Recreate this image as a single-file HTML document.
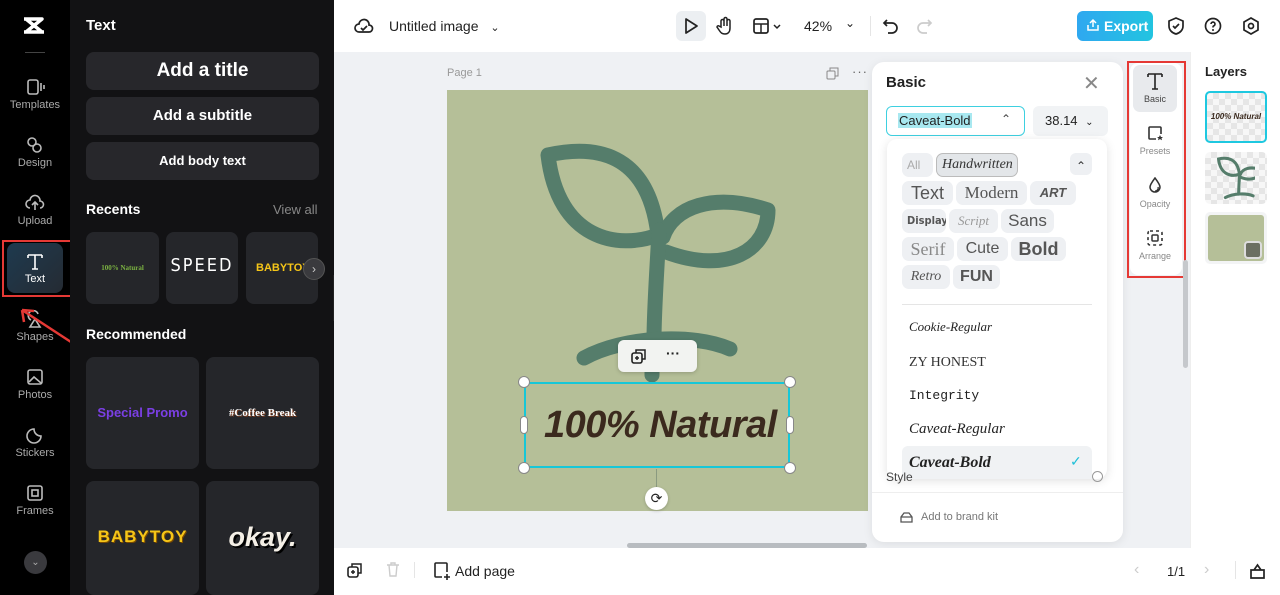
<!DOCTYPE html>
<html><head><meta charset="utf-8"><style>
*{box-sizing:border-box;margin:0;padding:0}
body{width:1280px;height:595px;overflow:hidden;font-family:"Liberation Sans",sans-serif;background:#fff;position:relative}
.a{position:absolute}
.nav{left:0;top:0;width:70px;height:595px;background:#000}
.ni{position:absolute;left:0;width:70px;text-align:center;color:#aaa;font-size:11px}
.ni svg{display:block;margin:0 auto 3px}
.pan{left:70px;top:0;width:264px;height:595px;background:#121214}
.btn{position:absolute;left:16px;width:233px;background:#27272b;border-radius:8px;color:#fff;font-weight:bold;text-align:center}
.card{position:absolute;background:#25262a;border-radius:8px}
.row{position:absolute;left:15px;height:24px;white-space:nowrap}
.pill{display:inline-block;background:#eef0f3;border-radius:7px;color:#555;padding:0 5px;margin-right:3px;height:24px;line-height:24px;vertical-align:top;overflow:hidden}
</style></head><body>
<div class="a nav">
 <svg class="a" style="left:22px;top:16px" width="26" height="20" viewBox="0 0 26 20"><path d="M2 3h18l-16 13h18M2 16h18L4 3" stroke="#fff" stroke-width="3.5" fill="none" stroke-linejoin="round"/></svg>
 <div class="a" style="left:25px;top:52px;width:20px;height:1px;background:#444"></div>
 <div class="ni" style="top:78px"><svg width="20" height="18"><rect x="3" y="2" width="10" height="14" rx="2" stroke="#bbb" stroke-width="1.6" fill="none"/><path d="M16 5v8M19 7v4" stroke="#bbb" stroke-width="1.6"/></svg>Templates</div>
 <div class="ni" style="top:136px"><svg width="20" height="18"><circle cx="7" cy="6" r="4" stroke="#bbb" stroke-width="1.6" fill="none"/><circle cx="12" cy="12" r="4" stroke="#bbb" stroke-width="1.6" fill="none"/></svg>Design</div>
 <div class="ni" style="top:194px"><svg width="20" height="18"><path d="M5 14a4 4 0 0 1 0-8 5 5 0 0 1 10 1 3.5 3.5 0 0 1 0 7M10 16V9M7 11l3-3 3 3" stroke="#bbb" stroke-width="1.6" fill="none"/></svg>Upload</div>
 <div class="a" style="left:7px;top:243px;width:56px;height:50px;border-radius:8px;background:linear-gradient(135deg,#1e3a4f,#252b33)"></div>
 <div class="a" style="left:2px;top:240px;width:70px;height:57px;border:2px solid #e53935"></div>
 <div class="ni" style="top:252px;color:#fff"><svg width="20" height="18"><path d="M3 3h14M10 3v14M3 3v3M17 3v3M7 17h6" stroke="#fff" stroke-width="1.6" fill="none"/></svg>Text</div>
 <div class="ni" style="top:310px"><svg width="20" height="18"><path d="M6 10a5 5 0 1 1 7-6M10 9l5 8H5z" stroke="#bbb" stroke-width="1.6" fill="none"/></svg>Shapes</div>
 <div class="ni" style="top:368px"><svg width="20" height="18"><rect x="3" y="2" width="14" height="14" rx="2" stroke="#bbb" stroke-width="1.6" fill="none"/><path d="M4 14l5-5 7 6" stroke="#bbb" stroke-width="1.6" fill="none"/></svg>Photos</div>
 <div class="ni" style="top:426px"><svg width="20" height="18"><path d="M16 10a7 7 0 1 1-7-7c0 4 3 7 7 7z" stroke="#bbb" stroke-width="1.6" fill="none"/></svg>Stickers</div>
 <div class="ni" style="top:484px"><svg width="20" height="18"><rect x="3" y="2" width="14" height="14" rx="2" stroke="#bbb" stroke-width="1.6" fill="none"/><rect x="7" y="6" width="6" height="6" stroke="#bbb" stroke-width="1.6" fill="none"/></svg>Frames</div>
 <div class="a" style="left:24px;top:551px;width:23px;height:23px;border-radius:50%;background:#3a3a3e;color:#aaa;font-size:10px;text-align:center;line-height:23px">⌄</div>
</div>
<svg class="a" style="left:14px;top:306px" width="62" height="40"><path d="M60 38L8 4M8 4l2 12M8 4l12 1" stroke="#e53935" stroke-width="2.5" fill="none"/></svg>
<div class="a pan">
 <div class="a" style="left:16px;top:17px;color:#fff;font-weight:bold;font-size:15px">Text</div>
 <div class="btn" style="top:52px;height:38px;line-height:38px;font-size:19px">Add a title</div>
 <div class="btn" style="top:97px;height:38px;line-height:38px;font-size:15px">Add a subtitle</div>
 <div class="btn" style="top:142px;height:38px;line-height:38px;font-size:13px">Add body text</div>
 <div class="a" style="left:16px;top:201px;color:#fff;font-weight:bold;font-size:14px">Recents</div>
 <div class="a" style="left:203px;top:202px;color:#888;font-size:13px">View all</div>
 <div class="card" style="left:16px;top:232px;width:73px;height:72px;color:#7cb342;font-size:7px;font-family:'Liberation Serif';font-weight:bold;text-align:center;line-height:72px">100% Natural</div>
 <div class="card" style="left:96px;top:232px;width:72px;height:72px;color:#fff;font-size:18px;text-align:center;line-height:68px;letter-spacing:2px;font-family:'DejaVu Sans Condensed'">SPEED</div>
 <div class="card" style="left:176px;top:232px;width:72px;height:72px;color:#f5c518;font-size:11px;font-weight:bold;line-height:72px;padding-left:10px;overflow:hidden;white-space:nowrap">BABYTOY</div>
 <div class="a" style="left:233px;top:258px;width:22px;height:22px;border-radius:50%;background:#3a3a3e;border:1px solid #555;color:#ccc;text-align:center;line-height:20px;font-size:12px">›</div>
 <div class="a" style="left:16px;top:326px;color:#fff;font-weight:bold;font-size:14px">Recommended</div>
 <div class="card" style="left:16px;top:357px;width:113px;height:112px;color:#7b3fe4;font-size:13px;font-weight:bold;text-align:center;line-height:112px">Special Promo</div>
 <div class="card" style="left:136px;top:357px;width:113px;height:112px;color:#fff;font-size:11px;font-weight:bold;font-family:'Liberation Serif';text-align:center;line-height:112px;text-shadow:1px 1px 0 #7a3b1e">#Coffee Break</div>
 <div class="card" style="left:16px;top:481px;width:113px;height:114px;color:#f5c518;font-size:17px;font-weight:bold;text-align:center;line-height:112px;letter-spacing:1px;text-shadow:1px 1px 0 #7a4a00">BABYTOY</div>
 <div class="card" style="left:136px;top:481px;width:113px;height:114px;color:#f4efe6;font-size:27px;font-weight:bold;font-style:italic;text-align:center;line-height:112px;text-shadow:2px 2px 0 #000">okay.</div>
</div>
<div class="a" style="left:333px;top:275px;width:7px;height:46px;background:#222;border-radius:0 4px 4px 0"></div>
<div class="a" style="left:334px;top:0;width:946px;height:52px;background:#fff"></div>
<svg class="a" style="left:354px;top:17px" width="20" height="18"><path d="M5 15a4 4 0 0 1 0-8 5 5 0 0 1 10 1 3.5 3.5 0 0 1 0 7z M7 11l2 2 4-4" stroke="#222" stroke-width="1.7" fill="none"/></svg>
<div class="a" style="left:389px;top:18px;font-size:14px;color:#222">Untitled image <span style="margin-left:8px;font-size:11px">⌄</span></div>
<div class="a" style="left:676px;top:11px;width:30px;height:30px;border-radius:6px;background:#eceff2"></div>
<svg class="a" style="left:683px;top:17px" width="16" height="18"><path d="M3 2l11 7-11 7z" stroke="#222" stroke-width="1.7" fill="none" stroke-linejoin="round"/></svg>
<svg class="a" style="left:715px;top:16px" width="18" height="20"><path d="M6 11V5a1.4 1.4 0 0 1 3 0v5V3a1.4 1.4 0 0 1 3 0v7V5a1.4 1.4 0 0 1 3 0v7c0 4-2 6-5 6s-4-1-6-4l-2-3a1.3 1.3 0 0 1 2-1z" stroke="#222" stroke-width="1.5" fill="none"/></svg>
<svg class="a" style="left:752px;top:17px" width="32" height="18"><rect x="2" y="2" width="14" height="14" rx="2" stroke="#222" stroke-width="1.7" fill="none"/><path d="M2 7h14M9 7v9M22 8l3 3 3-3" stroke="#222" stroke-width="1.5" fill="none"/></svg>
<div class="a" style="left:804px;top:18px;font-size:14px;color:#222">42%</div>
<div class="a" style="left:845px;top:16px;font-size:12px;color:#222">⌄</div>
<div class="a" style="left:870px;top:16px;width:1px;height:20px;background:#e5e5e5"></div>
<svg class="a" style="left:882px;top:17px" width="18" height="18"><path d="M5 3L2 6l3 3M2 6h8a5 5 0 0 1 0 10H6" stroke="#222" stroke-width="1.7" fill="none"/></svg>
<svg class="a" style="left:915px;top:17px" width="18" height="18"><path d="M13 3l3 3-3 3M16 6H8a5 5 0 0 0 0 10h4" stroke="#ccc" stroke-width="1.7" fill="none"/></svg>
<div class="a" style="left:1077px;top:11px;width:76px;height:30px;border-radius:6px;background:linear-gradient(90deg,#2fa8f0,#22c4e0);color:#fff;font-weight:bold;font-size:14px;line-height:30px;padding-left:27px">Export</div>
<svg class="a" style="left:1086px;top:18px" width="14" height="14"><path d="M2 7v5h10V7M7 9V2M4 5l3-3 3 3" stroke="#fff" stroke-width="1.5" fill="none"/></svg>
<svg class="a" style="left:1167px;top:16px" width="18" height="20"><path d="M9 2l7 3v5c0 4-3 7-7 8-4-1-7-4-7-8V5z M6 10l2 2 4-4" stroke="#222" stroke-width="1.7" fill="none"/></svg>
<svg class="a" style="left:1204px;top:17px" width="18" height="18"><circle cx="9" cy="9" r="7.5" stroke="#222" stroke-width="1.7" fill="none"/><path d="M7 7a2 2 0 1 1 2.5 2c-.5.2-.5.8-.5 1.5" stroke="#222" stroke-width="1.6" fill="none"/><circle cx="9" cy="13" r="1" fill="#222"/></svg>
<svg class="a" style="left:1242px;top:16px" width="18" height="20"><path d="M9 2l7 4v8l-7 4-7-4V6z" stroke="#222" stroke-width="1.7" fill="none"/><circle cx="9" cy="10" r="2.5" stroke="#222" stroke-width="1.7" fill="none"/></svg>
<div class="a" style="left:334px;top:52px;width:856px;height:496px;background:#eff1f4"></div>
<div class="a" style="left:447px;top:67px;font-size:11px;color:#999">Page 1</div>
<div class="a" style="left:852px;top:64px;font-size:13px;color:#666;letter-spacing:1px">···</div>
<svg class="a" style="left:826px;top:67px" width="13" height="13"><rect x="1" y="4" width="8" height="8" rx="1" stroke="#888" fill="none"/><path d="M4 4V1h8v8H9" stroke="#888" fill="none"/></svg>
<div class="a" style="left:447px;top:90px;width:421px;height:421px;background:#b5bf98"></div>
<svg class="a" style="left:447px;top:90px" width="421" height="421" viewBox="447 90 421 421">
 <g stroke="#557d6b" stroke-width="15" fill="none" stroke-linecap="round" stroke-linejoin="round">
  <path d="M548 155c45-10 100-5 110 80-40 15-100 5-110-80z"/>
  <path d="M663 237c10-30 50-45 105-27 0 40-40 65-102 42"/>
  <path d="M659 230c-2 40-5 80-5 110"/>
  <path d="M584 358c40-22 110-25 146-9"/>
  <path d="M652 372v3"/>
 </g>
</svg>
<div class="a" style="left:618px;top:340px;width:79px;height:32px;background:#f2f3f1;border-radius:6px;box-shadow:0 1px 4px rgba(0,0,0,.2)"></div>
<svg class="a" style="left:631px;top:348px" width="16" height="16"><rect x="1" y="5" width="10" height="10" rx="2" stroke="#222" stroke-width="1.6" fill="none"/><path d="M5 5V2h9v9h-3M6 8v4M4 10h4" stroke="#222" stroke-width="1.5" fill="none"/></svg>
<div class="a" style="left:666px;top:345px;font-size:14px;font-weight:bold;color:#222">···</div>
<div class="a" style="left:524px;top:382px;width:266px;height:86px;border:2px solid #16c7d8"></div>
<div class="a" style="left:544px;top:404px;font-size:38px;font-style:italic;font-weight:bold;color:#3b2a1e;font-family:'Liberation Sans Narrow','Liberation Sans',sans-serif;letter-spacing:-0.5px">100% Natural</div>
<div class="a" style="left:518px;top:376px;width:12px;height:12px;border-radius:50%;background:#fff;border:1px solid #888"></div>
<div class="a" style="left:784px;top:376px;width:12px;height:12px;border-radius:50%;background:#fff;border:1px solid #888"></div>
<div class="a" style="left:518px;top:462px;width:12px;height:12px;border-radius:50%;background:#fff;border:1px solid #888"></div>
<div class="a" style="left:784px;top:462px;width:12px;height:12px;border-radius:50%;background:#fff;border:1px solid #888"></div>
<div class="a" style="left:520px;top:416px;width:8px;height:18px;border-radius:4px;background:#fff;border:1px solid #888"></div>
<div class="a" style="left:786px;top:416px;width:8px;height:18px;border-radius:4px;background:#fff;border:1px solid #888"></div>
<div class="a" style="left:656px;top:469px;width:1px;height:18px;background:#8a9a80"></div>
<div class="a" style="left:645px;top:487px;width:23px;height:23px;border-radius:50%;background:#fff;box-shadow:0 1px 3px rgba(0,0,0,.2);text-align:center;line-height:22px;font-size:14px;color:#222">⟳</div>
<div class="a" style="left:627px;top:543px;width:240px;height:5px;border-radius:3px;background:#b8bcc0"></div>
<div class="a" style="left:872px;top:62px;width:251px;height:480px;background:#fff;border-radius:12px;box-shadow:0 2px 10px rgba(0,0,0,.08)"></div>
<div class="a" style="left:886px;top:74px;font-weight:bold;font-size:15px;color:#222">Basic</div>
<div class="a" style="left:1083px;top:71px;font-size:20px;color:#888">✕</div>
<div class="a" style="left:886px;top:106px;width:139px;height:30px;border:1.5px solid #3ed0e0;border-radius:6px"></div>
<div class="a" style="left:898px;top:113px;font-size:13px;color:#222;background:#a8e8f0;padding:0 1px">Caveat-Bold</div>
<div class="a" style="left:1001px;top:112px;font-size:12px;color:#444">⌃</div>
<div class="a" style="left:1033px;top:106px;width:75px;height:30px;border-radius:6px;background:#f1f3f5;font-size:13px;color:#222;line-height:30px;padding-left:12px">38.14 <span style="font-size:10px;margin-left:4px">⌄</span></div>
<div class="a" style="left:887px;top:139px;width:220px;height:340px;background:#fff;border-radius:10px;box-shadow:0 2px 10px rgba(0,0,0,.12);overflow:hidden">
 <div class="row" style="top:14px"><span class="pill" style="font-size:12px;color:#aaa;width:31px">All</span><span class="pill" style="font-size:14px;font-style:italic;background:#e3e6e9;border:1px solid #bbb;font-family:'Liberation Serif';color:#333;width:82px;text-align:center;line-height:22px">Handwritten</span></div>
 <div class="row" style="top:42px"><span class="pill" style="font-size:18px;width:51px;text-align:center">Text</span><span class="pill" style="font-size:17px;font-family:'Liberation Serif';width:71px;text-align:center">Modern</span><span class="pill" style="font-size:13px;font-weight:bold;font-style:italic;width:46px;text-align:center">ART</span></div>
 <div class="row" style="top:70px"><span class="pill" style="font-size:11px;font-weight:bold;font-family:'DejaVu Sans Condensed';width:44px;text-align:center">Display</span><span class="pill" style="font-size:13px;font-style:italic;color:#999;font-family:'Liberation Serif';width:49px;text-align:center">Script</span><span class="pill" style="font-size:17px;width:53px;text-align:center">Sans</span></div>
 <div class="row" style="top:98px"><span class="pill" style="font-size:18px;color:#888;font-family:'Liberation Serif';width:52px;text-align:center">Serif</span><span class="pill" style="font-size:16px;width:51px;text-align:center">Cute</span><span class="pill" style="font-size:18px;font-weight:bold;width:55px;text-align:center">Bold</span></div>
 <div class="row" style="top:126px"><span class="pill" style="font-size:14px;font-style:italic;font-family:'Liberation Serif';width:48px;text-align:center">Retro</span><span class="pill" style="font-size:16px;font-weight:bold;width:47px;text-align:center">FUN</span></div>
 <div style="position:absolute;left:183px;top:14px;width:22px;height:22px;border-radius:6px;background:#eef0f3;text-align:center;font-size:12px;line-height:26px;color:#333">⌃</div>
 <div style="position:absolute;left:15px;top:165px;width:190px;height:1px;background:#e5e5e5"></div>
 <div style="position:absolute;left:22px;top:180px;font-size:13px;font-style:italic;font-family:'Liberation Serif';color:#222">Cookie-Regular</div>
 <div style="position:absolute;left:22px;top:216px;font-size:14px;font-family:'Liberation Sans Narrow';color:#333">ZY HONEST</div>
 <div style="position:absolute;left:22px;top:249px;font-size:13px;font-family:'Liberation Mono';color:#222">Integrity</div>
 <div style="position:absolute;left:22px;top:282px;font-size:15px;font-style:italic;font-family:'Liberation Serif';color:#222">Caveat-Regular</div>
 <div style="position:absolute;left:15px;top:307px;width:190px;height:40px;border-radius:6px;background:#f0f2f4"></div>
 <div style="position:absolute;left:22px;top:315px;font-size:16px;font-style:italic;font-weight:bold;font-family:'Liberation Serif';color:#222">Caveat-Bold</div>
 <div style="position:absolute;left:183px;top:314px;font-size:14px;color:#20c0d8">✓</div>
</div>
<div class="a" style="left:886px;top:470px;font-size:12px;color:#444">Style</div>
<div class="a" style="left:1092px;top:471px;width:11px;height:11px;border-radius:50%;border:1.5px solid #999"></div>
<div class="a" style="left:872px;top:492px;width:251px;height:1px;background:#eee"></div>
<svg class="a" style="left:900px;top:511px" width="13" height="12"><path d="M1 11h11V6l-3-4H4L1 6zM1 6h11" stroke="#555" stroke-width="1.3" fill="none"/></svg>
<div class="a" style="left:921px;top:511px;font-size:11px;color:#777">Add to brand kit</div>
<div class="a" style="left:1130px;top:63px;width:52px;height:212px;background:#fff;border-radius:8px"></div>
<div class="a" style="left:1133px;top:65px;width:44px;height:47px;background:#e8eaed;border-radius:7px"></div>
<svg class="a" style="left:1146px;top:71px" width="18" height="20"><path d="M2 3h14M9 3v15M2 3v3M16 3v3M6 18h6" stroke="#222" stroke-width="1.6" fill="none"/></svg>
<div class="a" style="left:1130px;top:94px;width:50px;text-align:center;font-size:9px;color:#444">Basic</div>
<svg class="a" style="left:1147px;top:125px" width="16" height="16"><path d="M9 14H3a1 1 0 0 1-1-1V3a1 1 0 0 1 1-1h10a1 1 0 0 1 1 1v6" stroke="#333" stroke-width="1.6" fill="none"/><path d="M13 10l1 2h2l-1.5 1.3.5 2-2-1.2-2 1.2.5-2L10 12h2z" fill="#333"/></svg>
<div class="a" style="left:1130px;top:146px;width:50px;text-align:center;font-size:9px;color:#888">Presets</div>
<svg class="a" style="left:1148px;top:177px" width="14" height="16"><path d="M7 1C4 5 2 8 2 10a5 5 0 0 0 10 0c0-2-2-5-5-9z" stroke="#333" stroke-width="1.5" fill="none"/><path d="M7 14a3 3 0 0 0 3-4" stroke="#333" stroke-width="1.3" fill="none"/></svg>
<div class="a" style="left:1130px;top:199px;width:50px;text-align:center;font-size:9px;color:#888">Opacity</div>
<svg class="a" style="left:1147px;top:230px" width="16" height="16"><rect x="1" y="1" width="14" height="14" rx="2" stroke="#333" stroke-width="1.6" fill="none" stroke-dasharray="3 3"/><rect x="5" y="5" width="6" height="6" rx="1" stroke="#333" stroke-width="1.5" fill="none"/></svg>
<div class="a" style="left:1130px;top:251px;width:50px;text-align:center;font-size:9px;color:#888">Arrange</div>
<div class="a" style="left:1127px;top:61px;width:59px;height:217px;border:2px solid #e53935"></div>
<div class="a" style="left:1183px;top:260px;width:5px;height:108px;background:#c5c8cc;border-radius:3px"></div>
<div class="a" style="left:1190px;top:52px;width:90px;height:496px;background:#fff;border-left:1px solid #eee"></div>
<div class="a" style="left:1205px;top:64px;font-weight:bold;font-size:13px;color:#222">Layers</div>
<div class="a" style="left:1205px;top:91px;width:62px;height:52px;border:2px solid #1ec8e0;border-radius:5px;background:repeating-conic-gradient(#e6e6e6 0 25%,#f7f7f7 0 50%) 0 0/12px 12px;font-size:8px;font-style:italic;font-weight:bold;color:#3b2a1e;text-align:center;line-height:48px">100% Natural</div>
<div class="a" style="left:1205px;top:152px;width:62px;height:52px;border-radius:5px;background:repeating-conic-gradient(#e6e6e6 0 25%,#f7f7f7 0 50%) 0 0/12px 12px"></div>
<svg class="a" style="left:1217px;top:156px" width="38" height="44" viewBox="540 150 200 210"><g stroke="#557d6b" stroke-width="16" fill="none" stroke-linecap="round"><path d="M548 155c45-10 100-5 110 80-40 15-100 5-110-80z"/><path d="M663 237c10-30 50-45 105-27 0 40-40 65-102 42"/><path d="M659 230c-2 40-5 80-5 110"/><path d="M584 358c40-22 110-25 146-9"/></g></svg>
<div class="a" style="left:1205px;top:212px;width:62px;height:52px;border-radius:5px;background:#f3f4f5;padding:3px"><div style="width:56px;height:46px;background:#b5bf98;border-radius:3px"></div></div>
<div class="a" style="left:1244px;top:241px;width:18px;height:18px;border-radius:4px;background:#6b6f62;border:2px solid #ddd"></div>
<div class="a" style="left:334px;top:548px;width:946px;height:47px;background:#fff"></div>
<svg class="a" style="left:347px;top:562px" width="16" height="17"><rect x="1" y="5" width="10" height="10" rx="2" stroke="#222" stroke-width="1.6" fill="none"/><path d="M5 5V2h9v9h-3M6 8v4M4 10h4" stroke="#222" stroke-width="1.5" fill="none"/></svg>
<svg class="a" style="left:386px;top:562px" width="14" height="16"><path d="M1 3h12M5 3V1h4v2M3 3l1 11h6l1-11" stroke="#ccc" stroke-width="1.4" fill="none"/></svg>
<div class="a" style="left:414px;top:562px;width:1px;height:16px;background:#e5e5e5"></div>
<svg class="a" style="left:433px;top:562px" width="18" height="18"><path d="M9 15H3a1 1 0 0 1-1-1V2a1 1 0 0 1 1-1h10a1 1 0 0 1 1 1v8M14 12v6M11 15h6" stroke="#222" stroke-width="1.6" fill="none"/></svg>
<div class="a" style="left:455px;top:563px;font-size:14px;color:#222">Add page</div>
<div class="a" style="left:1134px;top:561px;font-size:16px;color:#ccc">‹</div>
<div class="a" style="left:1167px;top:564px;font-size:13px;color:#222">1/1</div>
<div class="a" style="left:1204px;top:561px;font-size:16px;color:#ccc">›</div>
<div class="a" style="left:1235px;top:561px;width:1px;height:18px;background:#e5e5e5"></div>
<svg class="a" style="left:1249px;top:563px" width="17" height="16"><path d="M2 7h13v8H2zM5 7l3.5-5L12 7" stroke="#222" stroke-width="1.7" fill="none"/></svg>
</body></html>
